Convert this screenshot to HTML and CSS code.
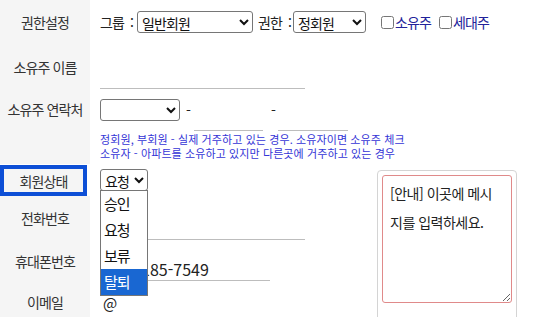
FILE: index.html
```html
<!DOCTYPE html>
<html lang="ko">
<head>
<meta charset="utf-8">
<title>회원 정보</title>
<link rel="stylesheet" href="styles.css">
</head>
<body>
<div class="form">
  <div class="label">권한설정</div>
  <div class="field wide row-perm">
    <span class="txt">그룹 :</span>
    <select class="sel sel-group"><option>일반회원</option></select>
    <span class="txt txt-level">권한 :</span>
    <select class="sel sel-level"><option>정회원</option></select>
    <label class="chk chk-first"><input type="checkbox">소유주</label>
    <label class="chk"><input type="checkbox">세대주</label>
  </div>

  <div class="label">소유주 이름</div>
  <div class="field wide end"><input class="line line-name" type="text"></div>

  <div class="label">소유주 연락처</div>
  <div class="field wide top">
    <select class="sel sel-tel"><option></option></select>
    <span class="dash dash-1">-</span>
    <input class="line line-tel1" type="text">
    <span class="dash dash-2">-</span>
    <input class="line line-tel2" type="text">
  </div>

  <div class="label"></div>
  <div class="info wide">정회원, 부회원 - 실제 거주하고 있는 경우. 소유자이면 소유주 체크<br>소유자 - 아파트를 소유하고 있지만 다른곳에 거주하고 있는 경우</div>

  <div class="label label-focus">회원상태</div>
  <div class="field">
    <div class="status">
      <select class="sel sel-status"><option>요청</option></select>
      <div class="popup">
        <div class="opt">승인</div>
        <div class="opt">요청</div>
        <div class="opt">보류</div>
        <div class="opt opt-active">탈퇴</div>
      </div>
    </div>
  </div>

  <div class="memo">
    <textarea class="memo-text">[안내] 이곳에 메시지를 입력하세요.</textarea>
  </div>

  <div class="label">전화번호</div>
  <div class="field end"><input class="line line-phone" type="text"></div>

  <div class="label">휴대폰번호</div>
  <div class="field end"><input class="line line-mobile" type="text" value="010-1185-7549"></div>

  <div class="label">이메일</div>
  <div class="field"><span class="at">@</span></div>
</div>
</body>
</html>
```

FILE: styles.css
```css
html, body {
  margin: 0;
  padding: 0;
  overflow: hidden;
  background: #ffffff;
}

body {
  font-family: "Noto Sans CJK KR", "Noto Sans", sans-serif;
  font-size: 14px;
  letter-spacing: -0.9px;
  color: #222222;
}

.form {
  display: grid;
  grid-template-columns: 90px 287px 158px;
  grid-template-rows: 44px 46px 38px 36px 32px 44px 42px 40px;
}

.label {
  grid-column: 1;
  background: #f5f5f5;
  display: flex;
  align-items: center;
  justify-content: center;
  color: #333333;
  white-space: nowrap;
}

.label-focus {
  border: 4px solid #0d4fd6;
  margin: 1px 3px 0 0;
}

.field {
  grid-column: 2;
  display: flex;
  align-items: center;
  padding-left: 10px;
  min-width: 0;
}

.wide {
  grid-column: 2 / 4;
}

.end {
  align-items: flex-end;
}

.top {
  align-items: flex-start;
}

.txt {
  white-space: nowrap;
  word-spacing: 3px;
}

.sel {
  font-family: "Noto Sans CJK KR", sans-serif;
  font-size: 14px;
  letter-spacing: -0.9px;
  height: 22px;
  color: #111111;
  background: #ffffff;
  border: 1px solid #767676;
  border-radius: 3px;
  margin: 0;
}

.sel-group {
  width: 116px;
  margin-left: 4px;
}

.txt-level {
  margin-left: 5px;
}

.sel-level {
  width: 73px;
  margin-left: 2px;
}

.chk {
  display: flex;
  align-items: center;
  color: #22229a;
  margin-left: 8px;
  white-space: nowrap;
}

.chk-first {
  margin-left: 15px;
}

.chk input {
  width: 13px;
  height: 13px;
  margin: 0 1px 0 0;
}

.line {
  border: 0;
  border-bottom: 1px solid #bdbdbd;
  background: transparent;
  outline: none;
  padding: 0 0 0 3px;
  margin: 0;
  height: 24px;
  box-sizing: border-box;
  font-family: "Noto Sans CJK KR", sans-serif;
  font-size: 15px;
  letter-spacing: 0;
  color: #222222;
}

.line-name {
  width: 205px;
  margin-bottom: 1px;
}

.sel-tel {
  width: 80px;
  margin-top: 9px;
}

.dash {
  margin-top: 10px;
  line-height: 20px;
  letter-spacing: 0;
}

.dash-1 {
  margin-left: 6px;
  margin-right: 3px;
}

.dash-2 {
  margin-left: 8px;
  margin-right: 2px;
}

.line-tel1 {
  width: 69px;
  height: 32px;
  margin-top: 9px;
}

.line-tel2 {
  width: 70px;
  height: 32px;
  margin-top: 9px;
}

.info {
  padding-left: 10px;
  align-self: center;
  font-size: 11px;
  line-height: 14px;
  letter-spacing: 0.1px;
  color: #3434d6;
  white-space: nowrap;
}

.status {
  position: relative;
}

.sel-status {
  width: 48px;
  display: block;
}

.popup {
  position: absolute;
  left: 0;
  top: 21px;
  width: 48px;
  box-sizing: border-box;
  border: 1px solid #767676;
  background: #ffffff;
  z-index: 2;
}

.opt {
  height: 26px;
  line-height: 26px;
  padding-left: 3px;
  font-size: 15px;
  letter-spacing: -1px;
  color: #111111;
}

.opt-active {
  background: #1967d2;
  color: #ffffff;
}

.memo {
  grid-column: 3;
  grid-row: 5 / 9;
  margin-top: 6px;
  width: 140px;
  box-sizing: border-box;
  border: 1px solid #d4d4d4;
  border-radius: 4px;
  padding: 4px;
  height: 160px;
}

.memo-text {
  display: block;
  width: 130px;
  height: 128px;
  box-sizing: border-box;
  margin: 0;
  border: 1px solid #e08a8a;
  border-radius: 3px;
  padding: 3px 7px;
  font-family: "Noto Sans CJK KR", sans-serif;
  font-size: 14px;
  letter-spacing: -0.5px;
  line-height: 29px;
  color: #222222;
  outline: none;
  overflow: hidden;
}

.line-phone {
  width: 205px;
}

.line-mobile {
  width: 170px;
  margin-bottom: 1px;
  padding-left: 0;
  font-size: 16px;
}

.at {
  font-size: 15px;
  letter-spacing: 0;
  margin-left: 3px;
}
```
